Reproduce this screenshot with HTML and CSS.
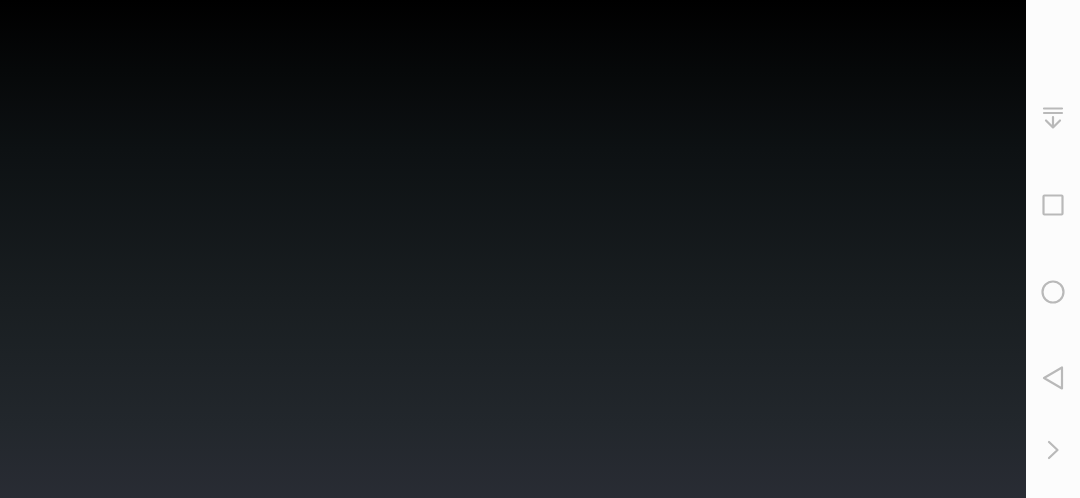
FILE: index.html
```html
<!DOCTYPE html>
<html lang="en">
	<head>
		<meta charset="utf-8">
		<title>Nav bar</title>
		<link rel="stylesheet" href="styles.css">
	</head>
	<body>
		<main class="screen"></main>
		<nav class="navbar">
			<svg class="nav-icon icon-pull" viewBox="0 0 28 28">
				<path d="M5 3.5H23M5 8H23M14 12V22.5M7 15.5L14 22.5L21 15.5"/>
			</svg>
			<svg class="nav-icon icon-recents" viewBox="0 0 28 28">
				<rect x="4.5" y="4.5" width="19" height="19" rx="1"/>
			</svg>
			<svg class="nav-icon icon-home" viewBox="0 0 28 28">
				<circle cx="14" cy="14" r="10.5"/>
			</svg>
			<svg class="nav-icon icon-back" viewBox="0 0 28 28">
				<path d="M5 14L23 3.5V24.5Z"/>
			</svg>
			<svg class="nav-icon icon-more" viewBox="0 0 28 28">
				<path d="M10 6L18.5 14L10 22"/>
			</svg>
		</nav>
	</body>
</html>
```

FILE: styles.css
```css
body {
	margin: 0;
	height: 498px;
	display: flex;
	overflow: hidden;
	background: #fcfcfc;
}

.screen {
	flex: 1;
	background: linear-gradient(to bottom, #000000 0%, #0d1113 30%, #191e21 60%, #22272c 85%, #292c34 100%);
}

.navbar {
	width: 54px;
	display: flex;
	flex-direction: column;
	align-items: center;
	background: #fcfcfc;
}

.nav-icon {
	width: 28px;
	height: 28px;
	fill: none;
	stroke: #b9b9b9;
	stroke-width: 2.2;
	stroke-linejoin: round;
	stroke-linecap: round;
}

.icon-pull {
	margin-top: 105px;
}

.icon-recents {
	margin-top: 58px;
}

.icon-home {
	margin-top: 58.5px;
}

.icon-back {
	margin-top: 58.5px;
}

.icon-more {
	margin-top: 44px;
}
```
